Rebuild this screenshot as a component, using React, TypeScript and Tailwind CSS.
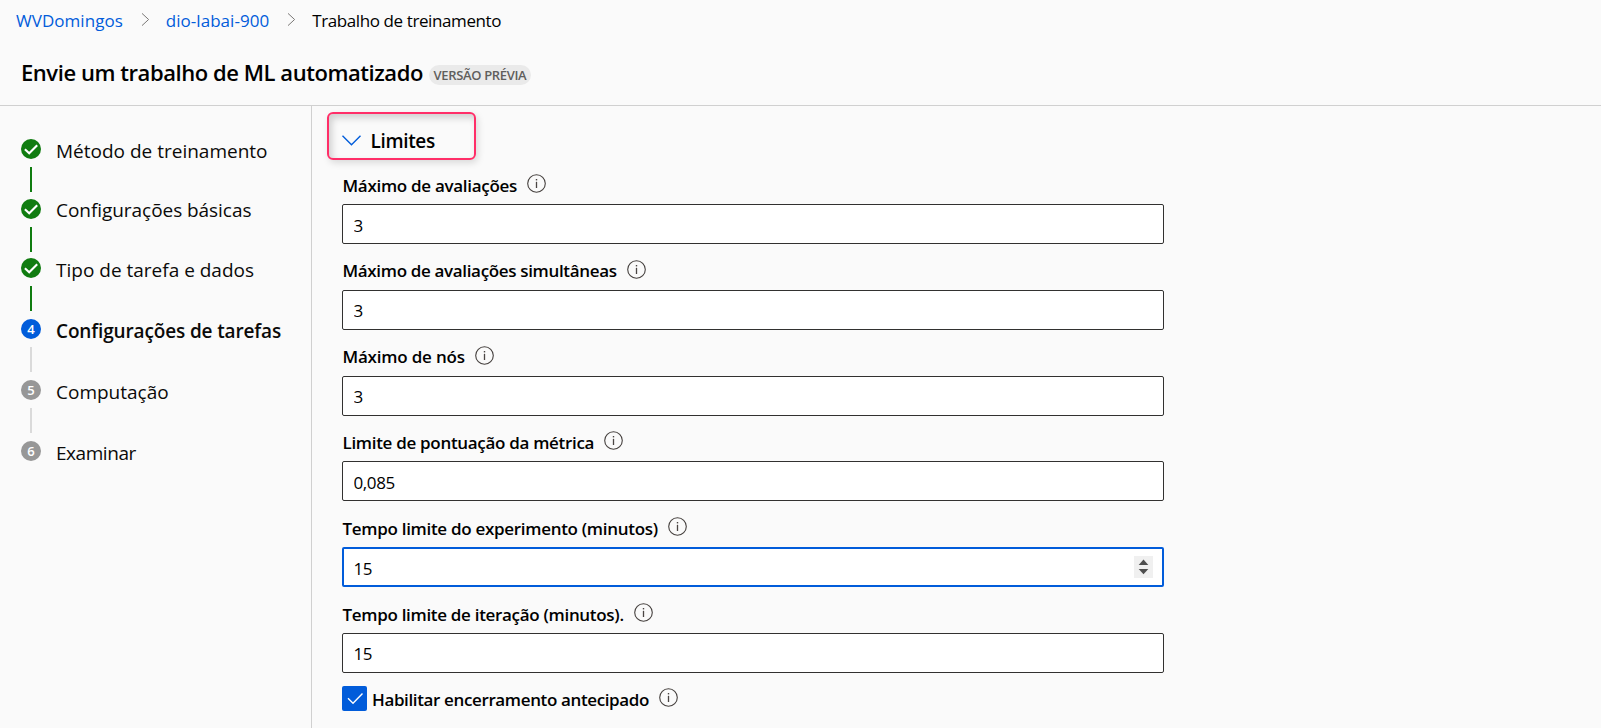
import { useState } from "react";

function Crumb({ children }: { children: string }) {
  return (
    <a href="#" className="text-[#015cda] tracking-[0.04px]">
      {children}
    </a>
  );
}

function CrumbSeparator() {
  return (
    <svg className="mr-4 -mt-[4px] ml-[18px] h-[13px] w-[9px] shrink-0" viewBox="0 0 9 13" fill="none" stroke="#7a7876" strokeWidth="1">
      <path d="M1 0.4 L7.6 6.5 L1 12.6" />
    </svg>
  );
}

function InfoIcon() {
  return (
    <svg className="ml-[10px] h-[19px] w-[19px] shrink-0" viewBox="0 0 19 19" fill="none">
      <circle cx="9.5" cy="9.5" r="8.8" stroke="#45403e" strokeWidth="1.1" />
      <path d="M9.5 7.8 V14" stroke="#4a4543" strokeWidth="1.3" />
      <path d="M9.5 5 V6.4" stroke="#4a4543" strokeWidth="1.4" />
    </svg>
  );
}

type StepState = "done" | "current" | "pending";

const steps: { label: string; state: StepState; row: string; text: string }[] = [
  { label: "Método de treinamento", state: "done", row: "h-[60px]", text: "" },
  { label: "Configurações básicas", state: "done", row: "h-[59px]", text: "-mt-px tracking-[-0.05px]" },
  { label: "Tipo de tarefa e dados", state: "done", row: "h-[61px]", text: "" },
  { label: "Configurações de tarefas", state: "current", row: "h-[61px]", text: "font-semibold tracking-[-0.14px]" },
  { label: "Computação", state: "pending", row: "h-[61px]", text: "" },
  { label: "Examinar", state: "pending", row: "h-[61px]", text: "tracking-[-0.45px]" },
];

const circleColor: Record<StepState, string> = {
  done: "bg-[#107c10]",
  current: "bg-[#015cda]",
  pending: "bg-[#979797]",
};

function Stepper() {
  return (
    <ol className="w-[312px] shrink-0 border-r border-[#d0d0d0] pt-[33px] pl-[21px]">
      {steps.map((step, i) => (
        <li key={step.label} className={`flex gap-[15px] ${step.row}`}>
          <div className="flex w-5 flex-col items-center gap-2">
            <span className={`flex h-5 w-5 shrink-0 items-center justify-center rounded-full text-[13px] leading-5 font-semibold text-white ${circleColor[step.state]}`}>
              {step.state === "done" ? (
                <svg className="h-5 w-5" viewBox="0 0 20 20" fill="none" stroke="#fff" strokeWidth="2.1">
                  <path d="M3.9 10.2 L8.2 14.2 L16.2 6.3" />
                </svg>
              ) : (
                i + 1
              )}
            </span>
            {i < steps.length - 1 && (
              <span className={`h-[25px] w-0.5 ${step.state === "done" ? "bg-[#107c10]" : "bg-[#dadada]"}`} />
            )}
          </div>
          <span className={`pt-[2px] text-[19px] leading-5 whitespace-nowrap text-[#0b0a09] ${step.text}`}>{step.label}</span>
        </li>
      ))}
    </ol>
  );
}

const fields = [
  { label: "Máximo de avaliações", value: "3", spacing: "tracking-[-0.3px]" },
  { label: "Máximo de avaliações simultâneas", value: "3", spacing: "tracking-[-0.34px]" },
  { label: "Máximo de nós", value: "3", spacing: "tracking-[-0.2px]" },
  { label: "Limite de pontuação da métrica", value: "0,085", spacing: "tracking-[-0.31px]" },
  { label: "Tempo limite do experimento (minutos)", value: "15", spacing: "tracking-[-0.3px]", active: true },
  { label: "Tempo limite de iteração (minutos).", value: "15", spacing: "tracking-[-0.31px]" },
];

type FieldProps = { label: string; value: string; spacing: string; active?: boolean };

function Field({ label, value: initial, spacing, active }: FieldProps) {
  const [value, setValue] = useState(initial);
  return (
    <label className="block">
      <span className="flex h-[30px] items-start">
        <span className={`ml-[0.5px] pt-[0.6px] text-[17px] leading-[22px] font-semibold text-black ${spacing}`}>{label}</span>
        <InfoIcon />
      </span>
      <span className={`flex h-10 w-[822px] items-center rounded-[2px] bg-white ${active ? "border-2 border-[#015cda] pr-[9px] pl-[9.5px]" : "border border-[#323130] px-[10.5px]"}`}>
        <input
          className="h-full min-w-0 flex-1 bg-transparent pt-[2px] text-[17px] tracking-[-0.4px] text-black outline-none"
          value={value}
          onChange={(e) => setValue(e.target.value)}
        />
        {active && (
          <svg className="h-[22px] w-[19px] bg-[#f0f0f0]" viewBox="0 0 19 22" fill="#4f4f4f">
            <path d="M9.5 3.6 L14.3 9 H4.7 Z" />
            <path d="M9.5 18.2 L14.3 13 H4.7 Z" />
          </svg>
        )}
      </span>
    </label>
  );
}

export default function App() {
  return (
    <div className="flex h-[728px] flex-col overflow-hidden bg-[#fafafa] font-['Open_Sans','Noto_Sans',sans-serif] text-black">
      <header className="h-[106px] shrink-0 border-b border-[#d0d0d0]">
        <nav className="flex items-center pt-[9px] pl-4 text-[17px] leading-6">
          <Crumb>WVDomingos</Crumb>
          <CrumbSeparator />
          <Crumb>dio-labai-900</Crumb>
          <CrumbSeparator />
          <span className="tracking-[-0.4px]">Trabalho de treinamento</span>
        </nav>
        <div className="flex items-center pt-[23px] pl-[21px]">
          <h1 className="text-[22px] leading-8 font-semibold tracking-[-0.44px]">Envie um trabalho de ML automatizado</h1>
          <span className="mt-[5px] ml-[6px] flex h-5 w-[102px] items-center justify-center rounded-full bg-[#eaeaea] text-[13px] leading-5 font-semibold tracking-[-0.34px] whitespace-nowrap text-[#605e5c]">
            VERSÃO PRÉVIA
          </span>
        </div>
      </header>
      <div className="flex flex-1">
        <Stepper />
        <main className="pt-[6px] pl-[14.5px]">
          <button className="flex h-12 w-[149px] items-start rounded-[6px] border-2 border-[#ff2e68] pt-[16.5px] pl-[13px] shadow-[2px_3px_7px_rgba(0,0,0,0.13),inset_3px_4px_7px_rgba(0,0,0,0.17)]">
            <svg className="mt-[4px] h-[11px] w-[19px]" viewBox="0 0 19 11" fill="none" stroke="#015cda" strokeWidth="1.4">
              <path d="M0.5 0.8 L9.5 9.8 L18.5 0.8" />
            </svg>
            <span className="ml-[10px] text-[19px] leading-5 font-semibold tracking-[-0.35px]">Limites</span>
          </button>
          <div className="flex flex-col gap-[15.8px] pt-[14px] pl-[15.5px]">
            {fields.map((f) => (
              <Field key={f.label} {...f} />
            ))}
          </div>
          <div className="flex items-center pt-[13px] pl-[15.5px]">
            <span role="checkbox" aria-checked="true" className="h-[25px] w-[25px] rounded-[2px] bg-[#015cda]">
              <svg className="h-[25px] w-[25px]" viewBox="0 0 25 25" fill="none" stroke="#fff" strokeWidth="1.4">
                <path d="M6 12.3 L11 17.2 L20.5 7.4" />
              </svg>
            </span>
            <span className="mt-[3px] ml-[5px] text-[17px] leading-[22px] font-semibold tracking-[-0.37px]">Habilitar encerramento antecipado</span>
            <span className="-mt-[2px]">
              <InfoIcon />
            </span>
          </div>
        </main>
      </div>
    </div>
  );
}
